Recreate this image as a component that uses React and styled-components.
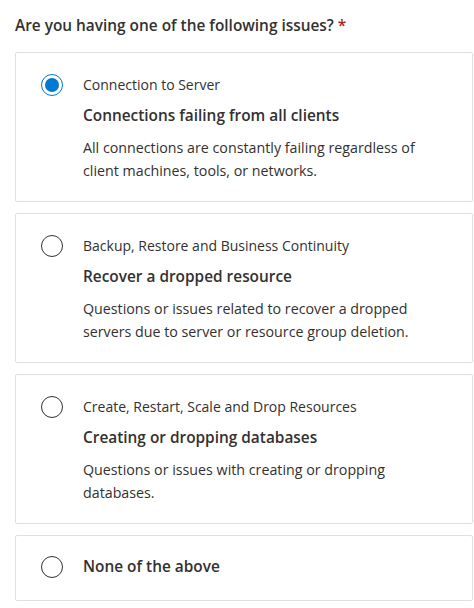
import styled, { createGlobalStyle } from 'styled-components';

const GlobalStyle = createGlobalStyle`
  body {
    margin: 0;
    background: #fff;
    font-family: "Open Sans", "Noto Sans", sans-serif;
    color: #323130;
  }
`;

const Page = styled.div`
  padding: 16px 1px 0 15px;
`;

const Question = styled.div`
  font-size: 15.4px;
  font-weight: 600;
  line-height: 20px;
  color: #323130;
  margin-bottom: 16px;

  span {
    color: #a4262c;
    margin-left: 4px;
  }
`;

const List = styled.div`
  display: flex;
  flex-direction: column;
  gap: 11px;
`;

const Card = styled.label`
  display: flex;
  align-items: flex-start;
  gap: 20px;
  border: 1px solid #e1dfdd;
  border-radius: 2px;
  padding: ${(p) => (p.$compact ? '21px 25px 22px' : '22px 25px 19px')};
  background: #fff;
`;

const Radio = styled.span`
  flex: none;
  width: 22px;
  height: 22px;
  box-sizing: border-box;
  border-radius: 50%;
  border: 1px solid ${(p) => (p.$checked ? '#0078d4' : '#323130')};
  display: flex;
  align-items: center;
  justify-content: center;
  margin-top: -1px;

  &::after {
    content: '';
    width: 14px;
    height: 14px;
    border-radius: 50%;
    background: #0078d4;
    display: ${(p) => (p.$checked ? 'block' : 'none')};
  }
`;

const Body = styled.div`
  display: flex;
  flex-direction: column;
`;

const Category = styled.div`
  font-size: 14px;
  line-height: 20px;
`;

const Title = styled.div`
  font-size: 15.4px;
  font-weight: 600;
  line-height: 20px;
  margin-top: ${(p) => (p.$solo ? '0' : '11px')};
`;

const Desc = styled.div`
  font-size: 14.25px;
  line-height: 23px;
  margin-top: 10px;
  max-width: 345px;
`;

const options = [
  {
    category: 'Connection to Server',
    title: 'Connections failing from all clients',
    desc: 'All connections are constantly failing regardless of client machines, tools, or networks.',
    checked: true,
  },
  {
    category: 'Backup, Restore and Business Continuity',
    title: 'Recover a dropped resource',
    desc: 'Questions or issues related to recover a dropped servers due to server or resource group deletion.',
  },
  {
    category: 'Create, Restart, Scale and Drop Resources',
    title: 'Creating or dropping databases',
    desc: 'Questions or issues with creating or dropping databases.',
  },
];

const App = () => (
  <>
    <GlobalStyle />
    <Page>
      <Question>
        Are you having one of the following issues?<span>*</span>
      </Question>
      <List>
        {options.map((o) => (
          <Card key={o.title}>
            <Radio $checked={o.checked} />
            <Body>
              <Category>{o.category}</Category>
              <Title>{o.title}</Title>
              <Desc>{o.desc}</Desc>
            </Body>
          </Card>
        ))}
        <Card $compact>
          <Radio />
          <Body>
            <Title $solo>None of the above</Title>
          </Body>
        </Card>
      </List>
    </Page>
  </>
);

export default App;
